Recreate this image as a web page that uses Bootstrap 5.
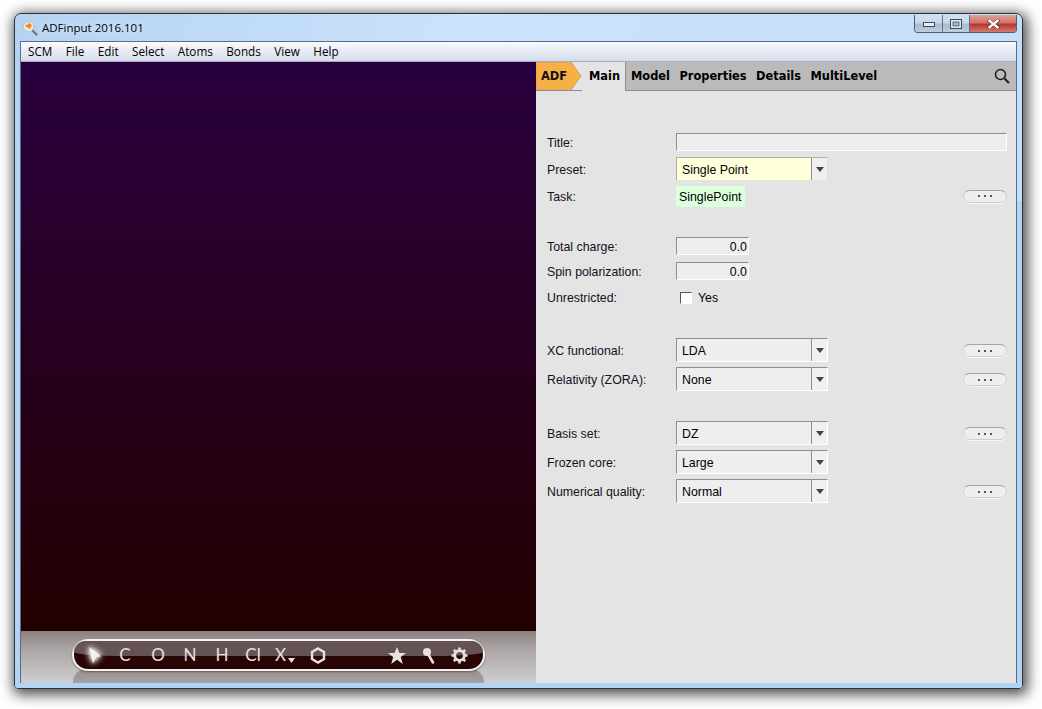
<!DOCTYPE html>
<html lang="en">
<head>
<meta charset="utf-8">
<title>ADFinput 2016.101</title>
<link href="https://cdn.jsdelivr.net/npm/bootstrap@5.3.0/dist/css/bootstrap.min.css" rel="stylesheet">
<style>
html,body{height:100%;overflow:hidden;background:#fff}
.app-win{width:1009px;height:676px;margin:13px 0 0 14px;border:1px solid #2b3138;border-radius:7px 7px 4px 4px;box-shadow:2px 3px 13px 3px rgba(0,0,0,.68);background:linear-gradient(100deg,#b4d3f2 0%,#cbe3fb 40%,#c4defa 100%);overflow:hidden;position:relative;padding:0 5px 5px 5px}
.app-win::after{content:"";position:absolute;left:0;right:0;top:187px;bottom:0;background:#b2d5f5;z-index:0}
.title-row{height:27px;position:relative;z-index:1;font:11.5px/1 "Open Sans","Liberation Sans",sans-serif;color:#000}
.title-txt{margin-left:4px;padding-top:1px;text-shadow:0 0 6px #fff}
.app-ico{margin:0 0 0 2px}
.wbtns{height:18px;margin-top:-7px;border:1px solid #4d5d72;border-top:0;border-radius:0 0 4px 4px;overflow:hidden}
.wbtn{height:100%;border-right:1px solid #5f6f84;background:linear-gradient(#d4e2f0 0,#c8d8e8 45%,#aabdd0 55%,#bccfe1 100%)}
.wmin{width:28px}.wmax{width:27px}
.wclose{width:46px;border:0;background:linear-gradient(#e0a39a 0,#d0736a 45%,#b9372b 55%,#d27a70 100%)}
.inner-frame{height:642px;position:relative;z-index:1;border:1px solid #5c6c82;background:#e4e4e4}
.menu-row{height:20px;padding-left:7px;background:linear-gradient(#fbfcfe 0,#eef1f9 30%,#d7dcec 100%);border-bottom:1px solid #a8abb8;font:11.7px/19px "Open Sans","Liberation Sans",sans-serif;color:#000;gap:13.5px}
.menu-row span{display:block}
.main-area{height:621px}
.left-pane{width:515px}
.gl-canvas{height:569px;background:linear-gradient(#29003f,#230000)}
.tool-strip{height:52px;position:relative;background:linear-gradient(#8b8080 0,#a8a1a1 30%,#cfcfcf 100%);padding:8px 0 0 51px}
.tool-mirror{position:absolute;left:52px;top:37px;width:411px;height:15px;border-radius:16px 16px 0 0/14px 14px 0 0;background:linear-gradient(#948a8a,#aaa3a3)}
.tool-pill{position:relative;width:413px;height:32px;border:2px solid #f4f2f2;border-radius:16px;background:#290404;padding:0 11px 0 6px;box-shadow:0 1px 2px rgba(0,0,0,.35);z-index:1}
.tool-pill::before{content:"";position:absolute;left:0;right:0;top:0;height:15px;background:#655353;border-radius:14px 14px 60px 60px/13px 13px 5px 5px}
.tool-it{position:relative;height:28px;color:#e6e2e2;font:17px/28px "Lato","Liberation Sans",sans-serif;text-align:center;flex:none}
.w26{width:26px}.w28{width:28px}.w30{width:30px}.w34{width:34px}.w36{width:36px}.w38{width:38px}
.x-arrow{margin-left:2px;vertical-align:-2px}
.ic-glow{filter:drop-shadow(0 0 3px #fff) drop-shadow(0 0 2px #fff)}
.right-pane{width:480px;background:#e4e4e4;font:12.35px/1 "Liberation Sans",Arial,sans-serif;color:#000}
.tab-row{height:29px;background:#bababa;border-bottom:1px solid #8d8d8d;font:700 11.4px/28px "DejaVu Sans",Verdana,sans-serif;color:#000}
.adf-tab{width:46px;height:28px;position:relative;padding-left:5px;color:#111;flex:none;background:#e4e4e4}
.adf-tab svg{position:absolute;left:0;top:0;z-index:0}
.adf-tab span{position:relative;z-index:1}
.main-tab{width:44px;height:29px;margin-bottom:-1px;background:#e4e4e4;border-right:1px solid #8d8d8d;padding-left:7px;flex:none}
.tab-lnk{margin-left:9.5px}
.tab-first{margin-left:5px}
.srch{margin-right:6px;margin-top:6px}
.form-zone{padding:42px 9px 0 11px}
.frow{display:flex;align-items:center;position:relative}
.flabel{width:129px;flex:none;color:#14101c;padding-top:2px}
.fld{background:#eeeeee;border-top:1px solid #8e8e8e;border-left:1px solid #8e8e8e;border-right:1px solid #fff;border-bottom:1px solid #fff}
.h18{height:18px}.h24{height:24px}.h21{height:21px}
.title-fld{width:332px}
.num-fld{width:73px;text-align:right;padding-right:1px;line-height:19px}
.cmb{width:152px;height:24px;display:flex;background:#eeeeee;border-top:1px solid #8e8e8e;border-left:1px solid #8e8e8e;border-right:1px solid #fff;border-bottom:1px solid #fff}
.cmb-txt{flex:1;padding-left:5px;line-height:24px}
.cmb-arr{width:16px;border-left:1px solid #8e8e8e;display:flex;align-items:center;justify-content:center;background:#f0f0f0;flex:none}
.cmb-yel{border-left-color:#b3b39a;border-top-color:#b3b39a;border-right-color:#e4e4d0;border-bottom-color:#e4e4d0}
.cmb-yel .cmb-txt{background:#ffffdc}
.task-tag{background:#dcffdc;height:21px;width:69px;padding-left:3px;line-height:23px}
.more-btn{position:absolute;right:0;top:50%;margin-top:-7px;width:44px;height:13px;border-radius:7px;background:#eeeeee;border:1px solid #cfcfcf;border-top-color:#a5a5a5;display:flex;align-items:center;justify-content:center;gap:4px;box-shadow:0 1px 0 #f6f6f6}
.more-low{margin-top:-6px}
.more-btn i{display:block;width:2px;height:2px;background:#555}
.chk-box{width:12px;height:12px;background:#fff;border-style:solid;border-width:1px;border-color:#555 #fff #fff #555;margin:2px 6px 0 4px}
.yes-txt{padding-top:2px}
.gap-t6{margin-top:6px}.gap-t5{margin-top:5px}.gap-t7{margin-top:7px}.gap-t8{margin-top:8px}.gap-t30{margin-top:30px}.gap-t32{margin-top:32px}
</style>
</head>
<body class="m-0">
<div class="app-win">
  <div class="title-row d-flex align-items-center">
    <svg class="app-ico" width="16" height="16" viewBox="0 0 16 16"><path d="M9 9l5.500 5.500" stroke="#6f6f6f" stroke-width="2" stroke-linecap="round"/><circle cx="6.500" cy="6.500" r="5.200" fill="#e8e8e8" stroke="#bdbdbd"/><path d="M3 6l4-3 3 2-2 4z" fill="#f08a24"/></svg>
    <span class="title-txt">ADFinput 2016.101</span>
    <div class="wbtns d-flex ms-auto">
      <div class="wbtn wmin d-flex align-items-center justify-content-center"><svg width="12" height="6" viewBox="0 0 12 6"><rect x=".5" y="1.500" width="11" height="4" fill="#e8eef5" stroke="#3e4b5b"/></svg></div>
      <div class="wbtn wmax d-flex align-items-center justify-content-center"><svg width="12" height="10" viewBox="0 0 12 10"><rect x=".5" y=".5" width="11" height="9" fill="#dfe8f1" stroke="#3e4b5b"/><rect x="3" y="3" width="6" height="4" fill="#9fb5ca" stroke="#3e4b5b" stroke-width=".7"/></svg></div>
      <div class="wbtn wclose d-flex align-items-center justify-content-center"><svg width="13" height="10" viewBox="0 0 13 10"><path d="M1 1l11 8M12 1L1 9" stroke="#4d1c16" stroke-width="3.400"/><path d="M1.500 1l10 8M11.500 1l-10 8" stroke="#fff" stroke-width="2.400"/></svg></div>
    </div>
  </div>
  <div class="inner-frame">
    <div class="menu-row d-flex">
      <span>SCM</span><span>File</span><span>Edit</span><span>Select</span><span>Atoms</span><span>Bonds</span><span>View</span><span>Help</span>
    </div>
    <div class="main-area d-flex">
      <div class="left-pane">
        <div class="gl-canvas"></div>
        <div class="tool-strip">
          <div class="tool-mirror"></div>
          <div class="tool-pill d-flex align-items-center">
            <div class="tool-it w30 d-flex align-items-center justify-content-center"><svg class="ic-glow" width="14" height="17" viewBox="0 0 14 17"><path d="M1 0l12 9.500-5 .5-3 6.500z" fill="#f5f2f2"/></svg></div>
            <div class="tool-it w30">C</div>
            <div class="tool-it w36">O</div>
            <div class="tool-it w28">N</div>
            <div class="tool-it w36">H</div>
            <div class="tool-it w26">Cl</div>
            <div class="tool-it w38">X<svg class="x-arrow" width="7" height="5" viewBox="0 0 7 5"><path d="M0 0h7L3.500 5z" fill="#e6e2e2"/></svg></div>
            <div class="tool-it w28 d-flex align-items-center justify-content-center"><svg width="16" height="17" viewBox="0 0 16 17"><path d="M8 1.500l6 3.500v7l-6 3.500L2 12V5z" fill="none" stroke="#e6e2e2" stroke-width="2.400"/></svg></div>
            <div class="tool-it w30 ms-auto d-flex align-items-center justify-content-center"><svg width="18" height="17" viewBox="0 0 18 17"><path d="M9 0l2.400 6H18l-5.200 4 2 7L9 12.800 3.200 17l2-7L0 6h6.600z" fill="#e6e2e2"/></svg></div>
            <div class="tool-it w34 d-flex align-items-center justify-content-center"><svg width="14" height="17" viewBox="0 0 14 17"><circle cx="5" cy="5" r="4" fill="#e6e2e2"/><path d="M6 7l5 8.500" stroke="#e6e2e2" stroke-width="2.600" stroke-linecap="round"/></svg></div>
            <div class="tool-it w26 d-flex align-items-center justify-content-center"><svg width="17" height="17" viewBox="0 0 17 17"><circle cx="8.500" cy="8.500" r="4.800" fill="none" stroke="#e6e2e2" stroke-width="2.800"/><path d="M8.500 .5v3M8.500 13.500v3M.5 8.500h3M13.500 8.500h3M2.800 2.800l2.100 2.100M12.100 12.100l2.100 2.100M14.200 2.800l-2.100 2.100M4.900 12.100l-2.100 2.100" stroke="#e6e2e2" stroke-width="2.600"/></svg></div>
          </div>
        </div>
      </div>
      <div class="right-pane">
        <div class="tab-row d-flex">
          <div class="adf-tab"><svg width="46" height="28" viewBox="0 0 46 28"><path d="M0 0h35l10 14-10 14H0z" fill="#f7b046" stroke="#c9a56c"/></svg><span>ADF</span></div>
          <div class="main-tab">Main</div>
          <span class="tab-first">Model</span>
          <span class="tab-lnk">Properties</span>
          <span class="tab-lnk">Details</span>
          <span class="tab-lnk">MultiLevel</span>
          <svg class="srch ms-auto" width="16" height="16" viewBox="0 0 16 16"><circle cx="6.500" cy="6.500" r="5" fill="none" stroke="#222" stroke-width="1.600"/><path d="M10.500 10.500l4.500 4.500" stroke="#222" stroke-width="2.200"/></svg>
        </div>
        <div class="form-zone">
          <div class="frow h18"><div class="flabel">Title:</div><div class="fld h18 title-fld"></div></div>
          <div class="frow h24 gap-t6"><div class="flabel">Preset:</div><div class="cmb cmb-yel"><div class="cmb-txt">Single Point</div><div class="cmb-arr"><svg width="8" height="5" viewBox="0 0 8 5"><path d="M0 0h8L4 5z" fill="#444"/></svg></div></div></div>
          <div class="frow h21 gap-t5"><div class="flabel">Task:</div><div class="task-tag">SinglePoint</div><div class="more-btn"><i></i><i></i><i></i></div></div>
          <div class="frow h18 gap-t30"><div class="flabel">Total charge:</div><div class="fld h18 num-fld">0.0</div></div>
          <div class="frow h18 gap-t7"><div class="flabel">Spin polarization:</div><div class="fld h18 num-fld">0.0</div></div>
          <div class="frow h18 gap-t8"><div class="flabel">Unrestricted:</div><div class="chk-box"></div><div class="yes-txt">Yes</div></div>
          <div class="frow h24 gap-t32"><div class="flabel">XC functional:</div><div class="cmb"><div class="cmb-txt">LDA</div><div class="cmb-arr"><svg width="8" height="5" viewBox="0 0 8 5"><path d="M0 0h8L4 5z" fill="#444"/></svg></div></div><div class="more-btn more-low"><i></i><i></i><i></i></div></div>
          <div class="frow h24 gap-t5"><div class="flabel">Relativity (ZORA):</div><div class="cmb"><div class="cmb-txt">None</div><div class="cmb-arr"><svg width="8" height="5" viewBox="0 0 8 5"><path d="M0 0h8L4 5z" fill="#444"/></svg></div></div><div class="more-btn more-low"><i></i><i></i><i></i></div></div>
          <div class="frow h24 gap-t30"><div class="flabel">Basis set:</div><div class="cmb"><div class="cmb-txt">DZ</div><div class="cmb-arr"><svg width="8" height="5" viewBox="0 0 8 5"><path d="M0 0h8L4 5z" fill="#444"/></svg></div></div><div class="more-btn more-low"><i></i><i></i><i></i></div></div>
          <div class="frow h24 gap-t5"><div class="flabel">Frozen core:</div><div class="cmb"><div class="cmb-txt">Large</div><div class="cmb-arr"><svg width="8" height="5" viewBox="0 0 8 5"><path d="M0 0h8L4 5z" fill="#444"/></svg></div></div></div>
          <div class="frow h24 gap-t5"><div class="flabel">Numerical quality:</div><div class="cmb"><div class="cmb-txt">Normal</div><div class="cmb-arr"><svg width="8" height="5" viewBox="0 0 8 5"><path d="M0 0h8L4 5z" fill="#444"/></svg></div></div><div class="more-btn more-low"><i></i><i></i><i></i></div></div>
        </div>
      </div>
    </div>
  </div>
</div>
</body>
</html>
